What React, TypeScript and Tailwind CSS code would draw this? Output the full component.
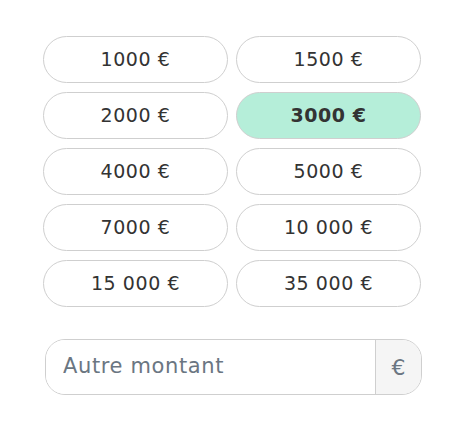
import { useState } from "react";

const amounts = [
  "1000 €",
  "1500 €",
  "2000 €",
  "3000 €",
  "4000 €",
  "5000 €",
  "7000 €",
  "10 000 €",
  "15 000 €",
  "35 000 €",
];

export default function App() {
  const [selected, setSelected] = useState("3000 €");

  return (
    <div
      className="w-[466px] h-[422px] bg-white pt-[36px] pl-[43px]"
      style={{ fontFamily: '"DejaVu Sans", sans-serif' }}
    >
      <div className="grid grid-cols-[185px_185px] gap-x-[8px] gap-y-[9px] w-[378px]">
        {amounts.map((a) => {
          const active = a === selected;
          return (
            <button
              key={a}
              onClick={() => setSelected(a)}
              className={`h-[47px] rounded-full border border-[#cfcfcf] text-[19px] tracking-[0.03em] text-[#333333] flex items-center justify-center ${
                active ? "bg-[#b5eed9] font-semibold" : "bg-white"
              }`}
            >
              {a}
            </button>
          );
        })}
      </div>

      {/* Custom amount */}
      <div className="mt-[32px] ml-[2px] w-[377px] h-[56px] flex rounded-[20px] border border-[#cfcfcf] overflow-hidden">
        <input
          placeholder="Autre montant"
          className="flex-1 min-w-0 bg-white pl-[17px] text-[21px] tracking-[0.03em] text-[#333333] placeholder:text-[#6b7682] outline-none"
        />
        <div className="w-[46px] border-l border-[#cfcfcf] bg-[#f5f5f5] flex items-center justify-center text-[22px] text-[#6b7682]">
          €
        </div>
      </div>
    </div>
  );
}
